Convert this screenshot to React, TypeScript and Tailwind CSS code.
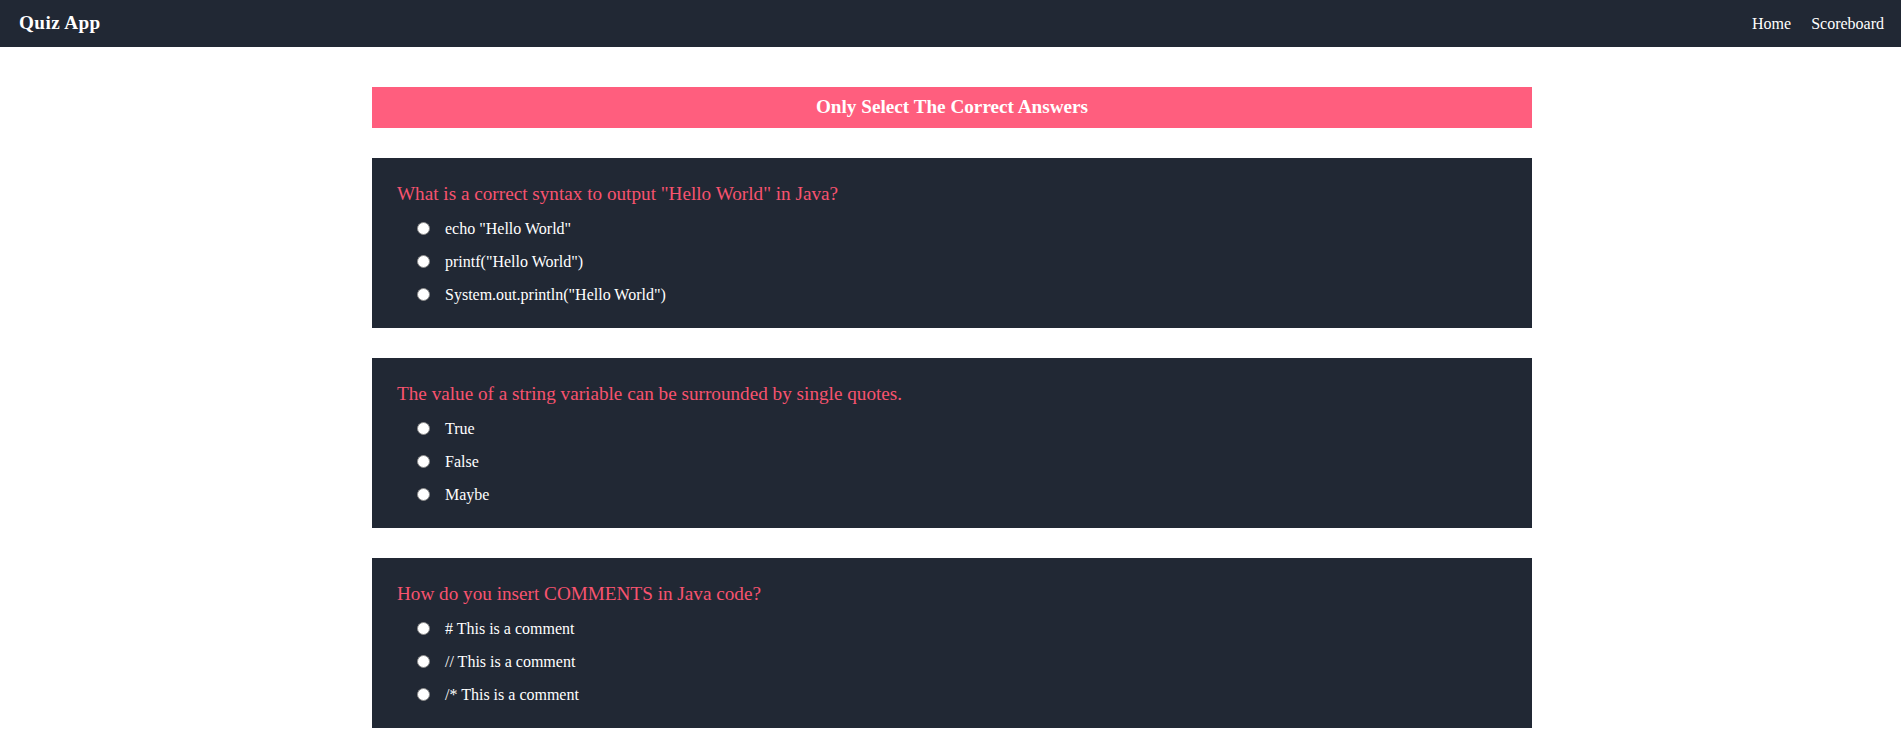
import React from "react";

type Question = {
  id: string;
  text: string;
  options: string[];
};

const questions: Question[] = [
  {
    id: "q1",
    text: 'What is a correct syntax to output "Hello World" in Java?',
    options: ['echo "Hello World"', 'printf("Hello World")', 'System.out.println("Hello World")'],
  },
  {
    id: "q2",
    text: "The value of a string variable can be surrounded by single quotes.",
    options: ["True", "False", "Maybe"],
  },
  {
    id: "q3",
    text: "How do you insert COMMENTS in Java code?",
    options: ["# This is a comment", "// This is a comment", "/* This is a comment"],
  },
];

function Navbar() {
  return (
    <header className="h-[47px] bg-[#212834] flex items-center justify-between">
      <div className="pl-[19px] text-[19.2px] font-bold text-white tracking-[0.4px]">
        Quiz App
      </div>
      <nav className="flex items-center gap-[20px] pr-[17px] text-[16px] text-white">
        <a href="#" className="hover:text-[#ff5e7e]">Home</a>
        <a href="#" className="hover:text-[#ff5e7e]">Scoreboard</a>
      </nav>
    </header>
  );
}

function QuestionCard({ q }: { q: Question }) {
  return (
    <div className="h-[170px] bg-[#212834] pl-[25px] pr-6 pt-[22px]">
      <h3 className="text-[19.2px] leading-[28px] text-[#f7536f]">{q.text}</h3>
      <ul className="mt-[4px] pl-[15px]">
        {q.options.map((opt, i) => (
          <li key={i} className="h-[33px] flex items-center">
            <input
              type="radio"
              name={q.id}
              id={`${q.id}-${i}`}
              className="appearance-none ml-[5px] w-[13px] h-[13px] rounded-full bg-white border border-[#8a8a8a] checked:bg-[#ff5e7e]"
            />
            <label htmlFor={`${q.id}-${i}`} className="ml-[15px] text-[16px] text-white">
              {opt}
            </label>
          </li>
        ))}
      </ul>
    </div>
  );
}

export default function App() {
  return (
    <div className="min-h-screen bg-white font-['Liberation_Serif','Times_New_Roman',serif]">
      <Navbar />
      <main className="flex justify-center pt-10 pb-10">
        <div className="w-[1160px] ml-[3px]">
          {/* Banner */}
          <div className="h-[41px] bg-[#ff5e7e] flex items-center justify-center text-[19.2px] font-bold text-white">
            Only Select The Correct Answers
          </div>

          {/* Questions */}
          <div className="mt-[30px] flex flex-col gap-[30px]">
            {questions.map((q) => (
              <QuestionCard key={q.id} q={q} />
            ))}
          </div>
        </div>
      </main>
    </div>
  );
}
